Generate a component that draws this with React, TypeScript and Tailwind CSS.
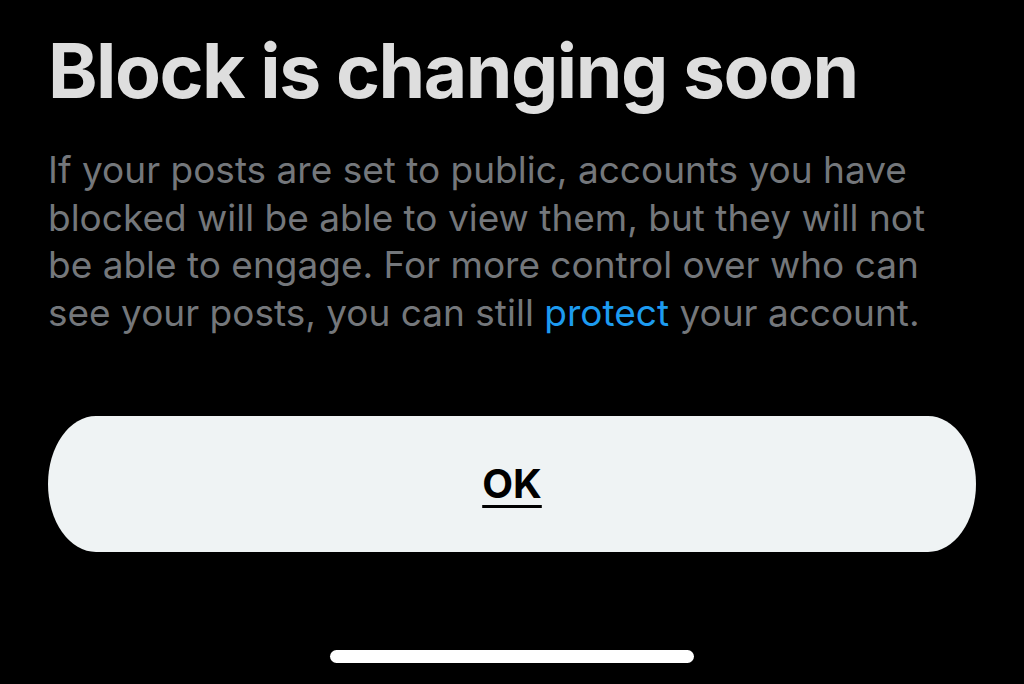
export default function App() {
  return (
    <div className="w-[1024px] h-[684px] bg-black overflow-hidden flex flex-col font-['Inter','Liberation_Sans',sans-serif]">
      <div className="px-12 pt-[27px] flex flex-col">
        {/* Title */}
        <h1 className="text-[#dedede] font-bold text-[75px] leading-[88px] tracking-[-1.5px]">
          Block is changing soon
        </h1>

        {/* Body copy */}
        <p className="mt-[31px] max-w-[910px] text-[#74777b] text-[37px] leading-[47.5px]">
          If your posts are set to public, accounts you have blocked will be able to view them, but they will not be able to engage. For more control over who can see your posts, you can still{' '}
          <span className="text-[#1d9bf0]">protect</span> your account.
        </p>

        {/* OK button */}
        <button className="mt-[80px] h-[136px] w-full bg-[#eff3f4] rounded-[48px/68px] flex items-center justify-center">
          <span className="text-black font-bold text-[40px] underline decoration-[3px] underline-offset-[7px]">OK</span>
        </button>
      </div>

      {/* Home indicator */}
      <div className="mt-auto mb-[21px] flex justify-center">
        <div className="w-[364px] h-[13px] rounded-full bg-white" />
      </div>
    </div>
  );
}
